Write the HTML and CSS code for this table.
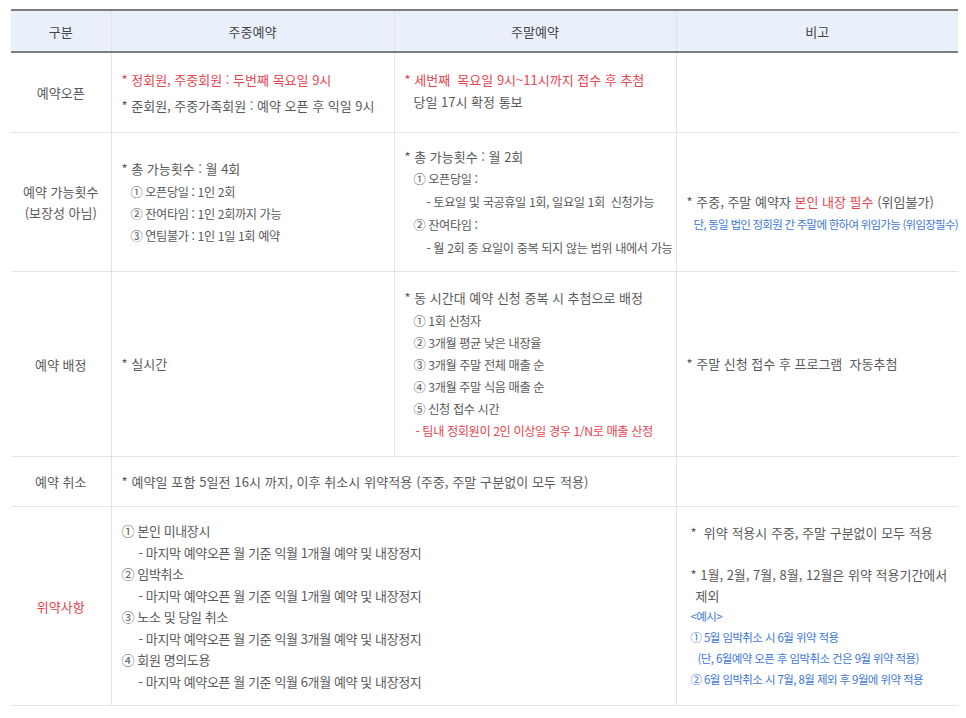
FILE: index.html
```html
<!DOCTYPE html>
<html lang="ko">
<head>
<meta charset="utf-8">
<title>예약 안내</title>
<link rel="stylesheet" href="styles.css">
</head>
<body>
<table class="rules">
  <colgroup>
    <col class="c1"><col class="c2"><col class="c3"><col class="c4">
  </colgroup>
  <thead>
    <tr><th>구분</th><th>주중예약</th><th>주말예약</th><th>비고</th></tr>
  </thead>
  <tbody>
    <tr class="r1">
      <td class="label">예약오픈</td>
      <td class="lh26">
        <p class="red">* 정회원, 주중회원 : 두번째 목요일 9시</p>
        <p>* 준회원, 주중가족회원 : 예약 오픈 후 익일 9시</p>
      </td>
      <td class="lh22">
        <p class="red">* 세번째&nbsp; 목요일 9시~11시까지 접수 후 추첨</p>
        <p class="in9 mb4">당일 17시 확정 통보</p>
      </td>
      <td></td>
    </tr>
    <tr class="r2">
      <td class="label">예약 가능횟수<br>(보장성 아님)</td>
      <td class="lh22">
        <p class="first">* 총 가능횟수 : 월 4회</p>
        <p class="in9 sm">① 오픈당일 : 1인 2회</p>
        <p class="in9 sm">② 잔여타임 : 1인 2회까지 가능</p>
        <p class="in9 sm">③ 연팀불가 : 1인 1일 1회 예약</p>
      </td>
      <td class="lh23">
        <p>* 총 가능횟수 : 월 2회</p>
        <p class="in9 sm">① 오픈당일 :</p>
        <p class="in22 sm">- 토요일 및 국공휴일 1회, 일요일 1회&nbsp; 신청가능</p>
        <p class="in9 sm">② 잔여타임 :</p>
        <p class="in22 sm">- 월 2회 중 요일이 중복 되지 않는 범위 내에서 가능</p>
      </td>
      <td class="lh22">
        <p class="mt21">* 주중, 주말 예약자 <span class="red">본인 내장 필수</span> (위임불가)</p>
        <p class="blue xs xs2 in7">단, 동일 법인 정회원 간 주말에 한하여 위임가능 (위임장필수)</p>
      </td>
    </tr>
    <tr class="r3">
      <td class="label">예약 배정</td>
      <td><p>* 실시간</p></td>
      <td class="lh22">
        <p class="first">* 동 시간대 예약 신청 중복 시 추첨으로 배정</p>
        <p class="in9 sm">① 1회 신청자</p>
        <p class="in9 sm">② 3개월 평균 낮은 내장율</p>
        <p class="in9 sm">③ 3개월 주말 전체 매출 순</p>
        <p class="in9 sm">④ 3개월 주말 식음 매출 순</p>
        <p class="in9 sm">⑤ 신청 접수 시간</p>
        <p class="red in11 sm">- 팀내 정회원이 2인 이상일 경우 1/N로 매출 산정</p>
      </td>
      <td><p>* 주말 신청 접수 후 프로그램&nbsp; 자동추첨</p></td>
    </tr>
    <tr class="r4">
      <td class="label">예약 취소</td>
      <td colspan="2"><p class="wide">* 예약일 포함 5일전 16시 까지, 이후 취소시 위약적용 (주중, 주말 구분없이 모두 적용)</p></td>
      <td></td>
    </tr>
    <tr class="r5">
      <td class="label red">위약사항</td>
      <td colspan="2" class="lh215 tight">
        <p>① 본인 미내장시</p>
        <p class="in17">- 마지막 예약오픈 월 기준 익월 1개월 예약 및 내장정지</p>
        <p>② 임박취소</p>
        <p class="in17">- 마지막 예약오픈 월 기준 익월 1개월 예약 및 내장정지</p>
        <p>③ 노소 및 당일 취소</p>
        <p class="in17">- 마지막 예약오픈 월 기준 익월 3개월 예약 및 내장정지</p>
        <p>④ 회원 명의도용</p>
        <p class="in17">- 마지막 예약오픈 월 기준 익월 6개월 예약 및 내장정지</p>
      </td>
      <td class="lh21 pl14">
        <p>*&nbsp; 위약 적용시 주중, 주말 구분없이 모두 적용</p>
        <p>&nbsp;</p>
        <p>* 1월, 2월, 7월, 8월, 12월은 위약 적용기간에서</p>
        <p class="in5">제외</p>
        <p class="blue xs">&lt;예시&gt;</p>
        <p class="blue xs">① 5월 임박취소 시 6월 위약 적용</p>
        <p class="blue xs in7">(단, 6월예약 오픈 후 임박취소 건은 9월 위약 적용)</p>
        <p class="blue xs">② 6월 임박취소 시 7월, 8월 제외 후 9월에 위약 적용</p>
      </td>
    </tr>
  </tbody>
</table>
</body>
</html>
```
FILE: styles.css
```css
html, body {
  margin: 0;
  padding: 0;
  background: #ffffff;
}

body {
  font-family: "Noto Sans CJK KR", "Noto Sans", sans-serif;
  font-size: 13px;
  color: #5a5a5a;
}

.rules {
  margin: 9px 0 0 11px;
  width: 947px;
  table-layout: fixed;
  border-collapse: collapse;
  border-top: 2px solid #7d7d7d;
}

.c1 { width: 100px; }
.c2 { width: 283px; }
.c3 { width: 282px; }
.c4 { width: 282px; }

.rules th {
  height: 40px;
  padding: 0;
  background: #eaf0fa;
  border-bottom: 2px solid #7d7d7d;
  border-left: 1px solid #dfe3ea;
  font-weight: normal;
  color: #444;
  font-size: 13px;
  text-align: center;
  vertical-align: middle;
}

.rules th:first-child { border-left: none; }

.rules td {
  padding: 0 0 0 10px;
  border-bottom: 1px solid #e4e4e4;
  border-left: 1px solid #e4e4e4;
  vertical-align: middle;
  line-height: 20px;
}

.rules td.label {
  border-left: none;
  padding: 0;
  text-align: center;
  line-height: 21px;
}

.rules p {
  margin: 0;
  white-space: nowrap;
}

.r1 td { height: 79px; }
.r2 td { height: 138px; }
.r3 td { height: 184px; }
.r4 td { height: 49px; }
.r5 td { height: 198px; }

.lh26 { line-height: 26px !important; }
.lh22 { line-height: 22px !important; }
.lh23 { line-height: 23px !important; }
.lh21 { line-height: 21px !important; }
.lh215 { line-height: 21.5px !important; }

.rules p.first { margin-bottom: 1px; }
.rules p.mb4 { margin-bottom: 4px; }
.rules p.mt21 { margin-top: 21px; }

.rules td.pl14 { padding-left: 14px; }

.in5 { padding-left: 5px; }
.in7 { padding-left: 7px; }
.in9 { padding-left: 9px; }
.in11 { padding-left: 11px; }
.in17 { padding-left: 17px; }
.in22 { padding-left: 22px; }

.sm { font-size: 12.2px; letter-spacing: -0.4px; }
.tight { letter-spacing: -0.4px; }
.wide { letter-spacing: 0.1px; }
.xs { font-size: 11.5px; letter-spacing: -0.6px; }
.xs2 { letter-spacing: -0.75px; }

.red { color: #e5454f; }
.blue { color: #3f78d6; }
```
